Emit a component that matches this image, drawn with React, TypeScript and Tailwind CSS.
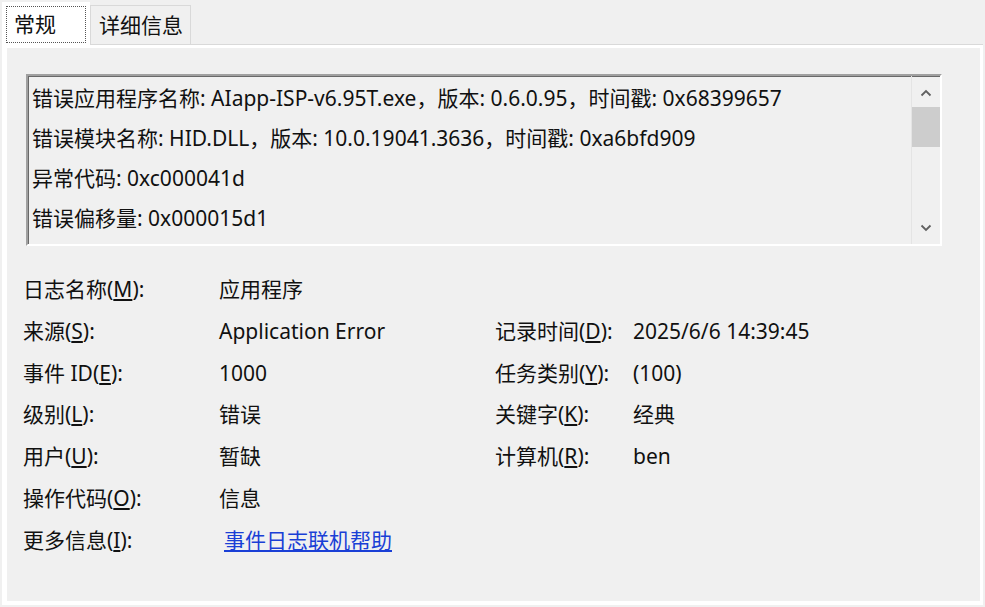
const rows: { left: [string, string, string]; value: string; right?: [string, string, string]; rightValue?: string; link?: boolean }[] = [
  { left: ['日志名称(', 'M', '):'], value: '应用程序' },
  { left: ['来源(', 'S', '):'], value: 'Application Error', right: ['记录时间(', 'D', '):'], rightValue: '2025/6/6 14:39:45' },
  { left: ['事件 ID(', 'E', '):'], value: '1000', right: ['任务类别(', 'Y', '):'], rightValue: '(100)' },
  { left: ['级别(', 'L', '):'], value: '错误', right: ['关键字(', 'K', '):'], rightValue: '经典' },
  { left: ['用户(', 'U', '):'], value: '暂缺', right: ['计算机(', 'R', '):'], rightValue: 'ben' },
  { left: ['操作代码(', 'O', '):'], value: '信息' },
  { left: ['更多信息(', 'I', '):'], value: '事件日志联机帮助', link: true },
];

const lines = [
  '错误应用程序名称: AIapp-ISP-v6.95T.exe，版本: 0.6.0.95，时间戳: 0x68399657',
  '错误模块名称: HID.DLL，版本: 10.0.19041.3636，时间戳: 0xa6bfd909',
  '异常代码: 0xc000041d',
  '错误偏移量: 0x000015d1',
];

function Label({ parts }: { parts: [string, string, string] }) {
  return (
    <span>
      {parts[0]}
      <span className="underline underline-offset-2">{parts[1]}</span>
      {parts[2]}
    </span>
  );
}

function Chevron({ up }: { up?: boolean }) {
  return (
    <svg width="12" height="8" viewBox="0 0 12 8" className="text-[#606060]">
      <polyline
        points={up ? '1.5,6.5 6,2 10.5,6.5' : '1.5,1.5 6,6 10.5,1.5'}
        fill="none"
        stroke="currentColor"
        strokeWidth="1.8"
      />
    </svg>
  );
}

export default function App() {
  return (
    <div
      className="h-[607px] w-[985px] overflow-hidden bg-[#f0f0f0] text-[21px] text-[#111]"
      style={{ fontFamily: '"Noto Sans", "Noto Sans CJK SC", sans-serif' }}
    >
      <div className="flex h-[44px] items-end pl-[2px]">
        <div className="relative z-10 -mb-[3px] flex h-[45px] w-[88px] bg-white p-[4px]">
          <div className="flex flex-1 items-center border border-dotted border-[#555] pl-[7px] leading-none">常规</div>
        </div>
        <div className="flex h-[39px] w-[101px] items-center border border-b-0 border-[#d9d9d9] pl-[8px] leading-none">
          详细信息
        </div>
      </div>

      <div className="ml-[2px] mr-[2px] h-[561px] border-t border-[#d9d9d9] bg-white pb-[4px] pl-[5px] pr-[3px] pt-[3px]">
        <div className="h-full bg-[#f0f0f0] pl-[19px] pt-[26px]">
          <div className="flex h-[172px] w-[916px] border-2 border-b-white border-l-[#a0a0a0] border-r-white border-t-[#a0a0a0] shadow-[inset_1px_1px_0_#696969]">
            <div className="flex-1 pl-[4px] pt-[2px]">
              {lines.map((l) => (
                <div key={l} className="h-[40px] leading-[40px] whitespace-nowrap">
                  {l}
                </div>
              ))}
            </div>
            <div className="flex w-[29px] flex-col items-center border-l border-[#e4e4e4]">
              <div className="flex h-[31px] items-center justify-center pt-[2px]">
                <Chevron up />
              </div>
              <div className="h-[40px] w-full bg-[#cdcdcd]" />
              <div className="flex-1" />
              <div className="flex h-[31px] items-center justify-center pb-[2px]">
                <Chevron />
              </div>
            </div>
          </div>

          <div className="-ml-[3px] mt-[23px] grid grid-cols-[196px_276px_138px_1fr]">
            {rows.map((r, i) => (
              <div key={i} className="contents">
                <div className="h-[41.8px] leading-[41.8px] whitespace-nowrap">
                  <Label parts={r.left} />
                </div>
                <div className="h-[41.8px] leading-[41.8px] whitespace-nowrap">
                  {r.link ? (
                    <a href="#" className="ml-[5px] text-[#1a3fd6] underline underline-offset-2">
                      {r.value}
                    </a>
                  ) : (
                    r.value
                  )}
                </div>
                <div className="h-[41.8px] leading-[41.8px] whitespace-nowrap">{r.right && <Label parts={r.right} />}</div>
                <div className="h-[41.8px] leading-[41.8px] whitespace-nowrap">{r.rightValue}</div>
              </div>
            ))}
          </div>
        </div>
      </div>
    </div>
  );
}
